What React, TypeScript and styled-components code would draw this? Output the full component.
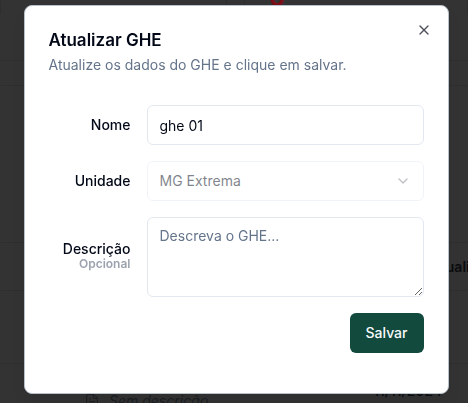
import React from "react";
import styled, { createGlobalStyle } from "styled-components";
import { ChevronDown, X, FileText } from "lucide-react";

const GlobalStyle = createGlobalStyle`
  *, *::before, *::after { box-sizing: border-box; }
  body {
    margin: 0;
    background: #333333;
    color: #020817;
    font-family: Inter, "Liberation Sans", sans-serif;
    font-size: 14px;
    line-height: 20px;
  }
  button, input, select, textarea { font: inherit; color: inherit; }
`;

const Page = styled.main`
  height: 100vh;
  overflow: hidden;
  color: #0b0c0f;
`;

const Summary = styled.section`
  display: grid;
  grid-template-columns: 227px 1fr;
  column-gap: 17px;
  height: 61px;
  border-bottom: 1px solid #2d2e2f;
`;

const SummaryCard = styled.div`
  height: 32px;
  margin-top: -18px;
  padding-left: 24px;
  border: solid #2d2e2f;
  border-width: 0 1px;
  color: #7a0d15;
  font-size: 24px;
  font-weight: 700;
  line-height: 32px;
`;

const Panel = styled.section`
  margin-top: 24px;
  padding-top: 156px;
  border-top: 1px solid #2d2e2f;
`;

const Table = styled.table`
  width: 100%;
  border-collapse: collapse;
  table-layout: fixed;
  white-space: nowrap;

  tr { border-top: 1px solid #2d2e2f; }
  th { height: 48px; padding: 0; text-align: left; font-weight: 600; }
  td { height: 72px; padding: 0; }
  th:last-child { width: 37px; }
`;

const Entries = styled.div`
  display: flex;
  justify-content: space-between;
  align-items: flex-start;
  border-top: 1px solid #2d2e2f;
  padding: 17px 26px 0 84px;
`;

const EntryDate = styled.span`
  font-weight: 500;
`;

const EmptyNote = styled.span`
  display: flex;
  align-items: center;
  gap: 9px;
  padding-top: 10px;
  color: #1b1e22;
  font-style: italic;
`;

const Overlay = styled.div`
  position: fixed;
  inset: 0;
  display: flex;
  justify-content: center;
  align-items: flex-start;
  padding: 5px 16px 5px 20px;
`;

const Dialog = styled.section`
  position: relative;
  width: 100%;
  max-width: 425px;
  padding: 24px 24px 40px;
  border: 1px solid #b9c2cb;
  border-radius: 8px;
  background: #ffffff;
  box-shadow: 0 10px 15px -3px rgba(0, 0, 0, 0.1);
`;

const DialogHeader = styled.header`
  display: grid;
  gap: 6px;
`;

const Title = styled.h2`
  margin: 0;
  font-size: 17px;
  line-height: 20px;
  font-weight: 600;
`;

const Description = styled.p`
  margin: 0;
  color: #64748b;
  line-height: 18px;
`;

const CloseButton = styled.button`
  position: absolute;
  top: 16px;
  right: 16px;
  display: flex;
  padding: 0;
  border: 0;
  background: none;
  opacity: 0.7;
  cursor: pointer;
`;

const Form = styled.form`
  display: grid;
  gap: 16px;
  margin-top: 31px;
`;

const Field = styled.div`
  display: grid;
  grid-template-columns: 1fr minmax(0, 277px);
  column-gap: 16px;
  align-items: center;
`;

const Label = styled.label`
  display: flex;
  flex-direction: column;
  text-align: right;
  font-weight: 500;
  line-height: 14px;
`;

const Hint = styled.span`
  color: #9ca3af;
  font-size: 12px;
  line-height: 16px;
  font-weight: 600;
`;

const Input = styled.input`
  width: 100%;
  height: 40px;
  padding: 8px 12px;
  border: 1px solid #e2e8f0;
  border-radius: 6px;
  background: #ffffff;
  outline: none;
`;

const SelectWrap = styled.div`
  position: relative;
  opacity: 0.5;

  svg {
    position: absolute;
    top: 12px;
    right: 13px;
    opacity: 0.5;
    pointer-events: none;
  }
`;

const Select = styled.select`
  width: 100%;
  height: 40px;
  padding: 8px 12px;
  border: 1px solid #e2e8f0;
  border-radius: 6px;
  background: #ffffff;
  appearance: none;
  opacity: 1;
  color: #020817;
`;

const TextArea = styled.textarea`
  display: block;
  width: 100%;
  height: 80px;
  padding: 8px 12px;
  border: 1px solid #e2e8f0;
  border-radius: 6px;
  background: #ffffff;
  outline: none;

  &::placeholder { color: #64748b; }
`;

const SaveButton = styled.button`
  justify-self: end;
  height: 40px;
  padding: 8px 16px;
  border: 0;
  border-radius: 6px;
  background: #134a3e;
  color: #f8fafc;
  font-weight: 500;
  cursor: pointer;
`;

export default function App() {
  return (
    <>
      <GlobalStyle />
      <Page aria-hidden="true">
        <Summary>
          <SummaryCard />
          <SummaryCard>0</SummaryCard>
        </Summary>
        <Panel>
          <Table>
            <thead>
              <tr><th /><th>Atualizado</th></tr>
            </thead>
            <tbody>
              <tr><td /><td /></tr>
            </tbody>
          </Table>
          <Entries>
            <EmptyNote><FileText size={16} strokeWidth={1.5} />Sem descrição</EmptyNote>
            <EntryDate>11/11/2024</EntryDate>
          </Entries>
        </Panel>
      </Page>
      <Overlay>
        <Dialog role="dialog" aria-modal="true" aria-labelledby="dialog-title" aria-describedby="dialog-description">
          <DialogHeader>
            <Title id="dialog-title">Atualizar GHE</Title>
            <Description id="dialog-description">Atualize os dados do GHE e clique em salvar.</Description>
          </DialogHeader>
          <Form onSubmit={(event) => event.preventDefault()}>
            <Field>
              <Label htmlFor="name">Nome</Label>
              <Input id="name" defaultValue="ghe 01" />
            </Field>
            <Field>
              <Label htmlFor="unit">Unidade</Label>
              <SelectWrap>
                <Select id="unit" disabled>
                  <option>MG Extrema</option>
                </Select>
                <ChevronDown size={16} />
              </SelectWrap>
            </Field>
            <Field>
              <Label htmlFor="description">Descrição<Hint>Opcional</Hint></Label>
              <TextArea id="description" placeholder="Descreva o GHE..." />
            </Field>
            <SaveButton type="submit">Salvar</SaveButton>
          </Form>
          <CloseButton type="button" aria-label="Fechar"><X size={16} /></CloseButton>
        </Dialog>
      </Overlay>
    </>
  );
}
